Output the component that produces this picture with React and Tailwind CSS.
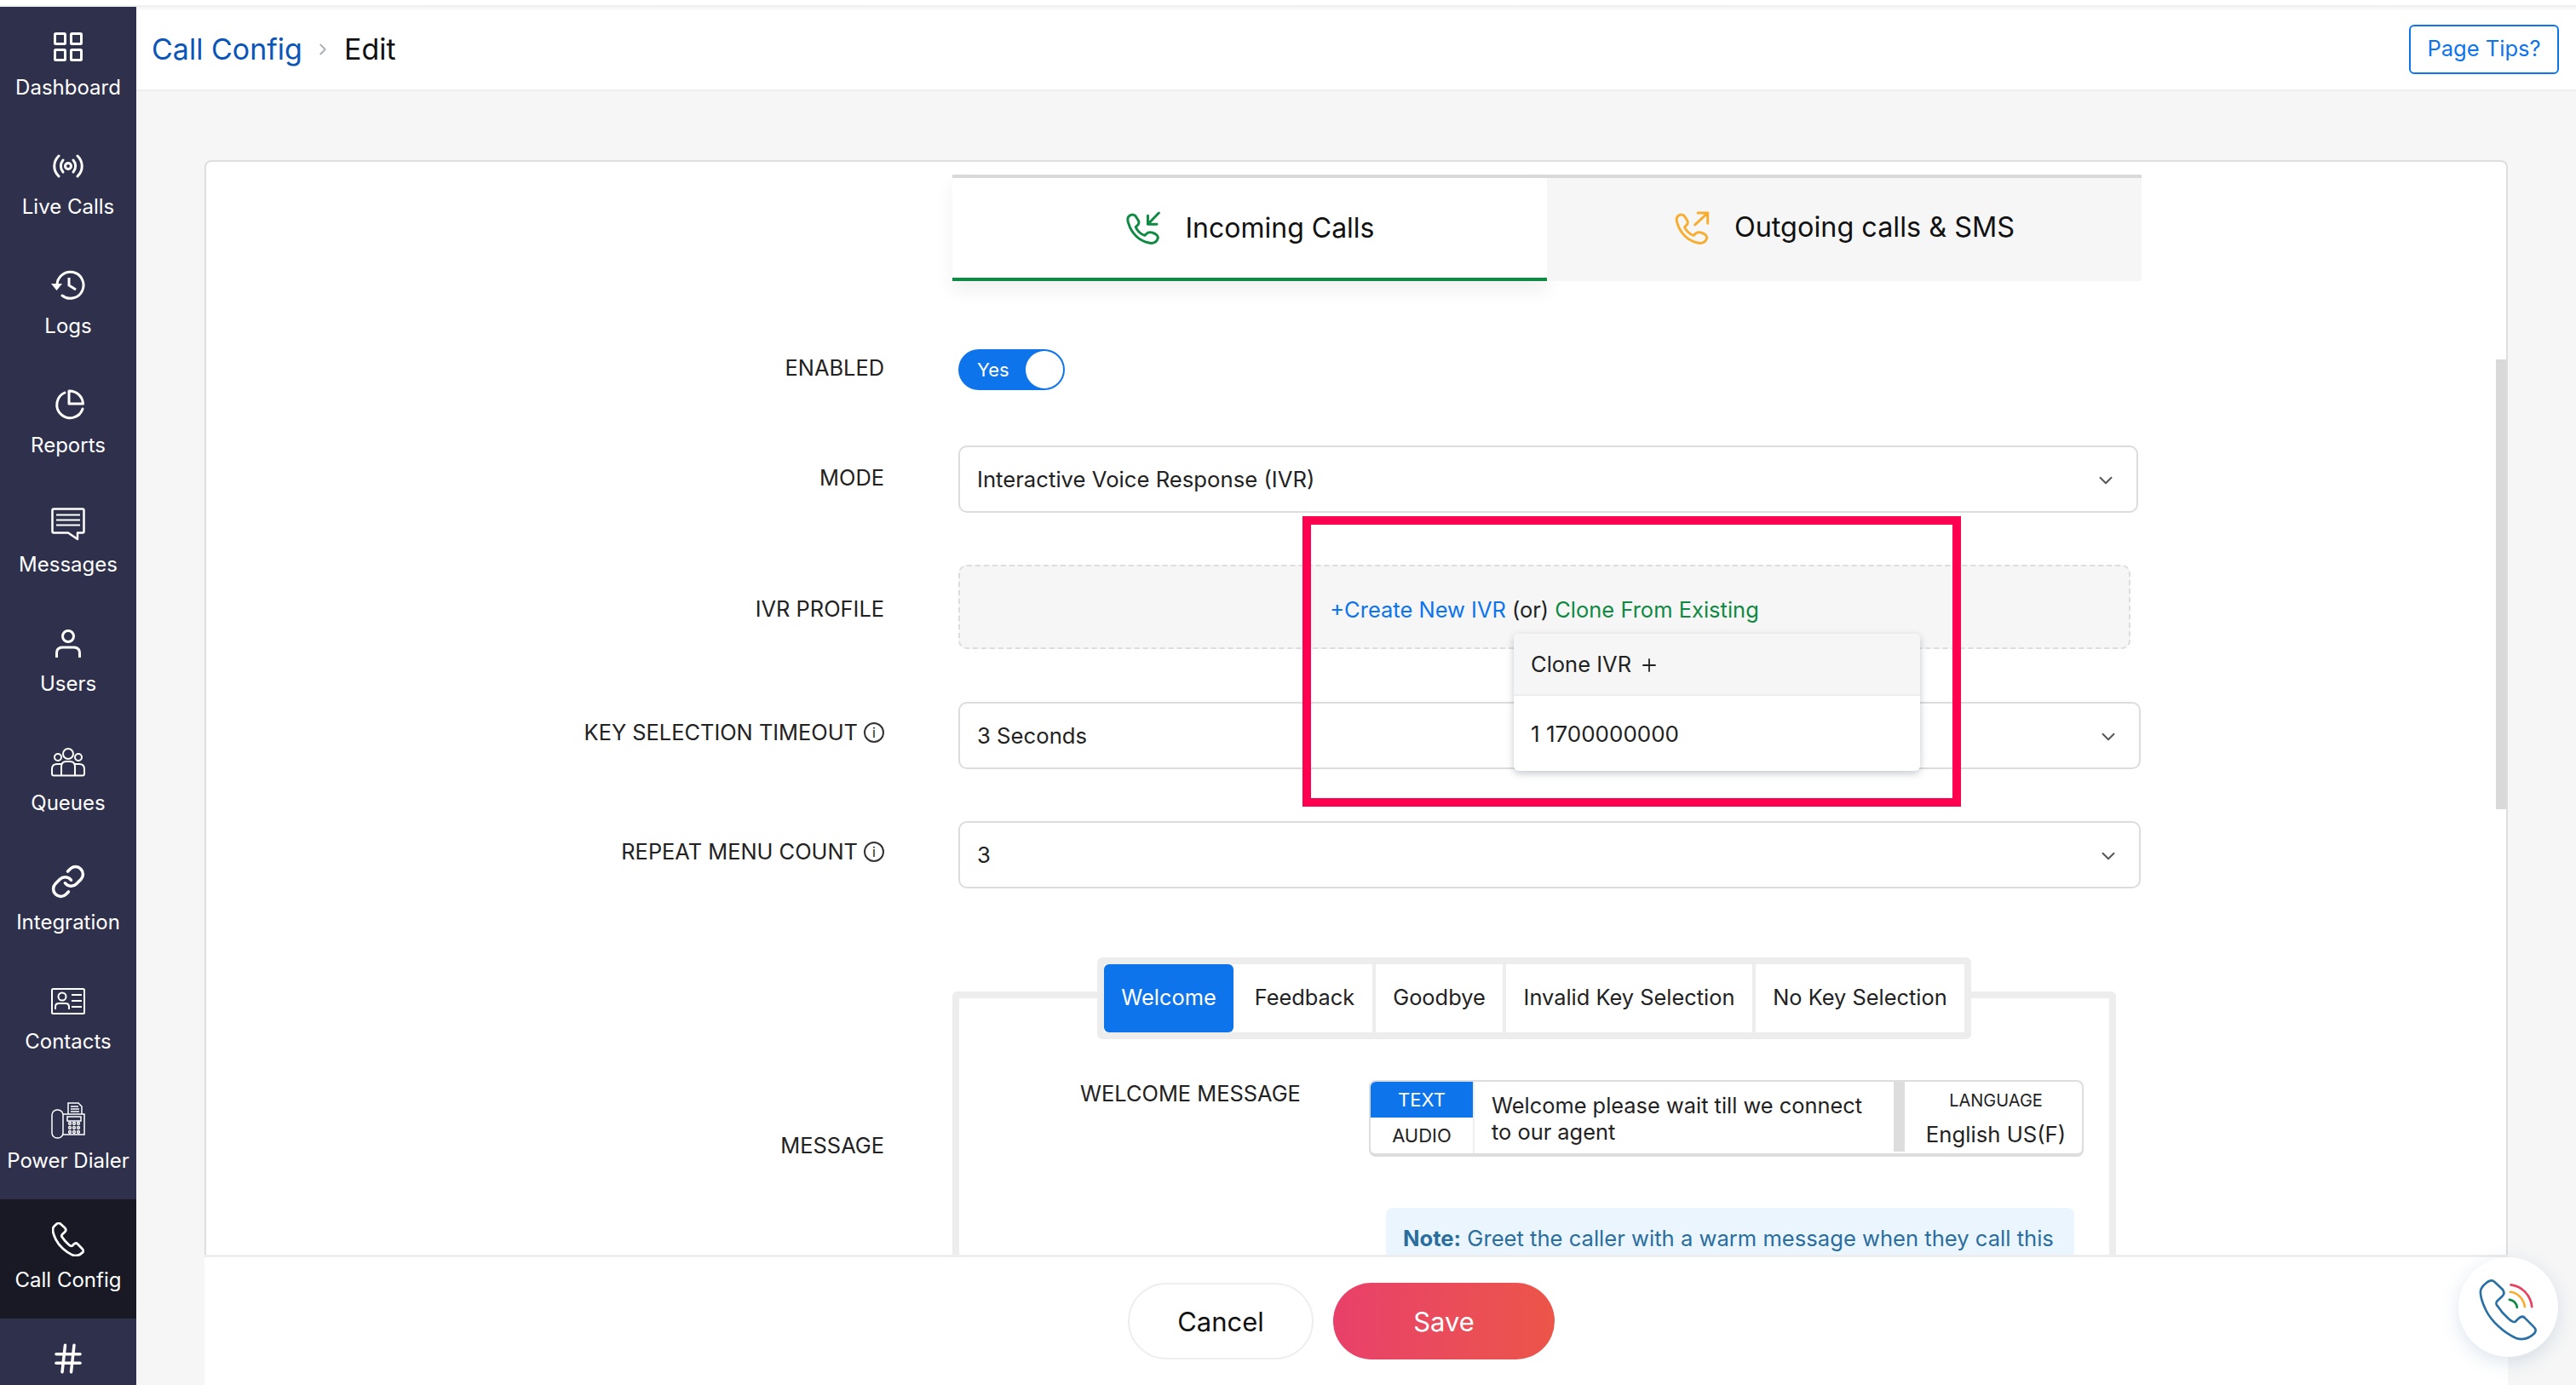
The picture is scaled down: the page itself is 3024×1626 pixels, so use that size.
import React from "react";
import { ChevronDown, ChevronRight, Hash, Link, Plus } from "lucide-react";

const HANDSET =
  "M195 130C185 128 165 145 158 158C152 172 158 200 175 235C195 275 240 315 280 332C305 340 325 335 345 315C352 305 350 300 340 290L310 260C303 254 296 256 288 264L278 274C272 278 265 274 255 265C240 252 225 235 214 218C208 210 210 206 216 200L232 185C240 178 240 170 232 160L205 135C201 131 198 130 195 130Z";

const SMALL_HANDSET =
  "M78 58C86 52 96 54 100 60L110 76C113 84 110 90 104 94L100 98C104 110 118 124 132 128L138 122C144 116 152 116 160 118L172 124C180 130 180 138 176 144C172 152 160 158 146 154C110 146 84 118 74 84C70 72 72 62 78 58Z";

const DashboardIcon = () => (
  <svg width="34" height="34" viewBox="0 0 34 34" fill="none" stroke="currentColor" strokeWidth="3">
    <rect x="1.5" y="1.5" width="12" height="12" rx="1" />
    <rect x="20.5" y="1.5" width="12" height="12" rx="1" />
    <rect x="1.5" y="20.5" width="12" height="12" rx="1" />
    <rect x="20.5" y="20.5" width="12" height="12" rx="1" />
  </svg>
);

const LiveIcon = () => (
  <svg width="38" height="28" viewBox="0 0 38 28" fill="none" stroke="currentColor" strokeWidth="3" strokeLinecap="round">
    <circle cx="19" cy="14" r="3.5" />
    <path d="M8 2C1 9 1 19 8 26M30 2C37 9 37 19 30 26" />
    <path d="M13 7C9.500 11 9.500 17 13 21M25 7C28.500 11 28.500 17 25 21" />
  </svg>
);

const LogsIcon = () => (
  <svg width="42" height="36" viewBox="0 0 42 36" fill="none" stroke="currentColor" strokeWidth="3">
    <path d="M8 18A15.500 15.500 0 1 1 14 30" strokeLinecap="round" />
    <path d="M1 16H14L7.500 24Z" fill="currentColor" stroke="none" />
    <path d="M22 9V18L30 23" />
  </svg>
);

const ReportsIcon = () => (
  <svg width="38" height="37" viewBox="0 0 38 37" fill="none" stroke="currentColor" strokeWidth="3">
    <path d="M15 4A15.500 15.500 0 1 0 36 23" strokeLinecap="round" />
    <path d="M20 2A16 16 0 0 1 36.500 17H20Z" strokeLinejoin="round" />
  </svg>
);

const MessagesIcon = () => (
  <svg width="40" height="39" viewBox="0 0 40 39" fill="none" stroke="currentColor" strokeWidth="2.500">
    <path d="M3 1.500H37Q38.500 1.500 38.500 3V28Q38.500 29.500 37 29.500H31V37L20 29.500H3Q1.500 29.500 1.500 28V3Q1.500 1.500 3 1.500Z" strokeLinejoin="round" />
    <path d="M6 8.500H34M6 14.500H34M6 20.500H34" strokeWidth="2" />
  </svg>
);

const UsersIcon = () => (
  <svg width="30" height="33" viewBox="0 0 30 33" fill="none" stroke="currentColor" strokeWidth="3">
    <circle cx="15" cy="8" r="6.500" />
    <path d="M1.500 33V28Q1.500 21 8.500 21H21.500Q28.500 21 28.500 28V33" />
  </svg>
);

const QueuesIcon = () => (
  <svg width="40" height="34" viewBox="0 0 40 34" fill="none" stroke="currentColor" strokeWidth="2">
    <circle cx="20" cy="7" r="6" />
    <circle cx="8" cy="11" r="4" />
    <circle cx="32" cy="11" r="4" />
    <path d="M12 32V22Q12 16 18 16H22Q28 16 28 22V32" />
    <path d="M12 19H7Q1 19 1 25V30Q1 32.500 3 32.500H37Q39 32.500 39 30V25Q39 19 33 19H28" />
  </svg>
);

const ContactsIcon = () => (
  <svg width="40" height="31" viewBox="0 0 40 31" fill="none" stroke="currentColor" strokeWidth="2">
    <rect x="1" y="1" width="38" height="29" rx="1.500" />
    <circle cx="13" cy="10" r="4.500" />
    <path d="M5 25V22Q5 18 9 18H17Q21 18 21 22V25" />
    <path d="M24 8H36M24 15H36M24 22H36" />
  </svg>
);

const DialerIcon = () => (
  <svg width="40" height="43" viewBox="0 0 40 43" fill="none" stroke="currentColor" strokeWidth="1.500">
    <rect x="1" y="9" width="13" height="33" rx="6" />
    <path d="M14 14H39V38H14" />
    <path d="M20 14V1H32L36 5V14" />
    <path d="M23 5H32M23 8H33M23 11H33" />
    <rect x="19" y="17" width="16" height="5" />
    {[25, 30, 35].map((y) =>
      [22, 27, 32].map((x) => <circle key={`${x}-${y}`} cx={x} cy={y} r="1.400" />)
    )}
  </svg>
);

const CallIcon = () => (
  <svg width="38" height="40" viewBox="150 125 205 215" fill="none" stroke="currentColor" strokeWidth="15" strokeLinejoin="round">
    <path d={HANDSET} />
  </svg>
);

const navItems = [
  { label: "Dashboard", icon: <DashboardIcon /> },
  { label: "Live Calls", icon: <LiveIcon /> },
  { label: "Logs", icon: <LogsIcon /> },
  { label: "Reports", icon: <ReportsIcon /> },
  { label: "Messages", icon: <MessagesIcon /> },
  { label: "Users", icon: <UsersIcon /> },
  { label: "Queues", icon: <QueuesIcon /> },
  { label: "Integration", icon: <Link size={42} strokeWidth={2} /> },
  { label: "Contacts", icon: <ContactsIcon /> },
  { label: "Power Dialer", icon: <DialerIcon /> },
  { label: "Call Config", icon: <CallIcon />, active: true },
  { label: "", icon: <Hash size={42} strokeWidth={2} /> },
];

const Sidebar = () => (
  <aside className="w-[160px] shrink-0 overflow-hidden bg-[#2f314c] text-white">
    {navItems.map((item) => (
      <div
        key={item.label || "hash"}
        className={`flex h-[140px] flex-col items-center pt-[15px] ${item.active ? "bg-[#181924]" : ""}`}
      >
        <div className="flex h-[64px] items-center justify-center">{item.icon}</div>
        <span className="whitespace-nowrap text-[24px] leading-[32px]">{item.label}</span>
      </div>
    ))}
  </aside>
);

const Header = () => (
  <header className="flex h-[99px] shrink-0 items-center justify-between border-b-2 border-[#eeeeee] bg-gradient-to-b from-[#f3f3f3] to-white to-[5%] pl-[18px] pr-[20px] pt-[2px]">
    <div className="flex items-center">
      <span className="text-[34px] text-[#0a56b8]">Call Config</span>
      <ChevronRight size={22} strokeWidth={2} className="ml-[13px] mr-[14px] text-[#a9adb5]" />
      <span className="text-[34px] text-[#111111]">Edit</span>
    </div>
    <button className="flex h-[58px] w-[176px] items-center justify-center rounded-[6px] border-2 border-[#0d74ec] text-[25.500px] text-[#0d74ec]">
      Page Tips?
    </button>
  </header>
);

const CallTabs = () => (
  <div className="ml-[876px] mt-[15px] grid h-[125px] w-[1396px] grid-cols-2">
    <div className="flex items-center justify-center gap-[28px] border-y-4 border-b-[#0f8a43] border-t-[#d9d9d9] bg-white shadow-[0_12px_20px_rgba(0,0,0,0.06)]">
      <svg width="43" height="42" viewBox="60 40 130 125" fill="none" stroke="#0f8a43" strokeWidth="9" strokeLinecap="round" strokeLinejoin="round">
        <path d={SMALL_HANDSET} />
        <path d="M182 48L143 88M143 58V88H175" />
      </svg>
      <span className="text-[32px] text-[#111111]">Incoming Calls</span>
    </div>
    <div className="flex items-center justify-center gap-[28px] border-y-4 border-b-[#f6f6f6] border-t-[#d9d9d9] bg-[#f6f6f6]">
      <svg width="43" height="42" viewBox="45 40 130 125" fill="none" stroke="#f7ad2f" strokeWidth="9" strokeLinecap="round" strokeLinejoin="round">
        <path d={SMALL_HANDSET} transform="translate(-17 0)" />
        <path d="M120 90L165 48M130 48H165V85" />
      </svg>
      <span className="text-[32.400px] text-[#111111]">Outgoing calls &amp; SMS</span>
    </div>
  </div>
);

const InfoDot = () => (
  <span className="ml-[7px] inline-flex h-[24px] w-[24px] items-center justify-center rounded-full border-2 border-[#333333] text-[16px] leading-none">
    i
  </span>
);

const Row = ({ label, info, className, labelClass = "", children }) => (
  <div className={`grid grid-cols-[796px_1fr] items-center gap-x-[87px] ${className}`}>
    <div className={`flex items-center justify-end text-[25.400px] text-[#222222] ${labelClass}`}>
      {label}
      {info && <InfoDot />}
    </div>
    {children}
  </div>
);

const SelectBox = ({ value, width }) => (
  <div className={`flex h-[79px] items-center justify-between rounded-[10px] border-2 border-[#dcdcdc] pl-[20px] pr-[23px] pt-[2px] text-[25.700px] text-[#222222] ${width}`}>
    {value}
    <ChevronDown size={26} strokeWidth={1.800} className="text-[#555555]" />
  </div>
);

const MessageTabs = () => {
  const tabs = [
    { name: "Goodbye", width: "w-[153px]" },
    { name: "Invalid Key Selection", width: "w-[293px]" },
    { name: "No Key Selection", width: "flex-1" },
  ];
  return (
    <div className="relative z-10 flex justify-center">
      <div className="flex h-[96px] w-[1026px] rounded-[6px] border-8 border-[#ededed] bg-white text-[25.400px] text-[#222222]">
        <div className="flex w-[152px] items-center justify-center rounded-[6px] bg-[#0d74ec] pb-[2px] text-white">Welcome</div>
        <div className="ml-[4px] flex w-[159px] items-center justify-center whitespace-nowrap pb-[2px]">Feedback</div>
        {tabs.map((tab) => (
          <div key={tab.name} className={`flex items-center justify-center whitespace-nowrap border-l-4 border-[#ededed] pb-[2px] ${tab.width}`}>
            {tab.name}
          </div>
        ))}
      </div>
    </div>
  );
};

const MessageBox = () => (
  <div className="-mt-[56px] h-[400px] rounded-t-[6px] border-x-[8px] border-t-[8px] border-[#ededed] pl-[142px] pt-[96px]">
    <div className="flex">
      <div className="w-[339px] text-[25.400px] leading-[32px] text-[#222222]">WELCOME MESSAGE</div>
      <div className="flex h-[90px] w-[839px] rounded-[8px] border-2 border-b-4 border-[#dddddd]">
        <div className="flex w-[122px] flex-col border-r-2 border-[#eeeeee] text-[22px]">
          <div className="flex h-[42px] items-center justify-center rounded-tl-[6px] bg-[#0d74ec] text-white">TEXT</div>
          <div className="flex flex-1 items-center justify-center text-[#222222]">AUDIO</div>
        </div>
        <div className="w-[492px] py-[12px] pl-[20px] pr-[20px] text-[25.400px] leading-[31px] text-[#222222]">
          Welcome please wait till we connect to our agent
        </div>
        <div className="h-[82px] w-[13px] bg-[#dddddd]" />
        <div className="flex flex-1 flex-col items-center justify-center gap-[14px] pl-[6px] pt-[2px] text-[#222222]">
          <span className="text-[20px] leading-[24px]">LANGUAGE</span>
          <span className="text-[25.700px] leading-[28px]">English US(F)</span>
        </div>
      </div>
    </div>
    <div className="ml-[359px] mt-[60px] w-[808px] rounded-[8px] bg-[#ebf5fd] pl-[20px] pr-[17px] pt-[20px] text-[25.600px] leading-[32px] text-[#2a6e9f]">
      <b>Note:</b> Greet the caller with a warm message when they call this number.
    </div>
  </div>
);

const ClonePopup = () => (
  <div className="absolute left-[652px] top-[81px] z-20 w-[477px] overflow-hidden rounded-[6px] bg-white text-[25.500px] text-[#222222] shadow-[0_3px_8px_rgba(60,70,90,0.3)]">
    <div className="flex h-[73px] items-center gap-[9px] border-b-2 border-[#eeeeee] bg-[#f6f6f6] pl-[20px] pt-[2px]">
      Clone IVR
      <Plus size={24} strokeWidth={1.800} />
    </div>
    <div className="flex h-[88px] items-center pl-[20px] text-[26px]">1 1700000000</div>
  </div>
);

const CallForm = () => (
  <div className="relative h-full flex-1 overflow-hidden rounded-t-[8px] border-x-2 border-t-2 border-[#dedede] bg-white">
    <CallTabs />
    <Row label="ENABLED" labelClass="pb-[4px]" className="mt-[80px]">
      <div className="flex h-[48px] w-[125px] items-center justify-between rounded-full bg-[#0d74ec] pl-[22px] pr-[2px] text-[22px] text-white">
        Yes
        <span className="h-[44px] w-[44px] rounded-full bg-white" />
      </div>
    </Row>
    <Row label="MODE" labelClass="pb-[2px]" className="mt-[65px]">
      <SelectBox value="Interactive Voice Response (IVR)" width="w-[1385px]" />
    </Row>
    <Row label="IVR PROFILE" labelClass="pt-[6px]" className="mt-[61px]">
      <div className="relative">
        <div className="flex h-[99px] w-[1376px] items-center justify-center rounded-[10px] border-2 border-dashed border-[#dddddd] bg-[#f6f6f6] pt-[8px] text-[25.500px] text-[#222222]">
          <span className="text-[#0d74ec]">+Create New IVR</span>
          <span className="mx-[7px]">(or)</span>
          <span className="text-[#0f8a43]">Clone From Existing</span>
        </div>
        <ClonePopup />
        <div className="absolute -top-[57px] left-[404px] z-30 h-[341px] w-[773px] border-[10px] border-[#ff0050]" />
      </div>
    </Row>
    <Row label="KEY SELECTION TIMEOUT" info labelClass="pb-[6px]" className="mt-[62px]">
      <SelectBox value="3 Seconds" width="w-[1388px]" />
    </Row>
    <Row label="REPEAT MENU COUNT" info labelClass="pb-[6px]" className="mt-[61px]">
      <SelectBox value="3" width="w-[1388px]" />
    </Row>
    <Row label="MESSAGE" className="mt-[81px]">
      <div className="-ml-[7px] h-[442px] w-[1366px]">
        <MessageTabs />
        <MessageBox />
      </div>
    </Row>
    <div className="absolute right-0 top-[232px] h-[528px] w-[12px] bg-[#d9d9d9]" />
  </div>
);

const Footer = () => (
  <footer className="flex h-[153px] shrink-0 items-center gap-[23px] border-t-[3px] border-[#eeeeee] bg-white pl-[1084px]">
    <button className="h-[90px] w-[218px] rounded-full border-2 border-[#eeeeee] bg-white pt-[2px] text-[31px] text-[#111111]">
      Cancel
    </button>
    <button className="h-[90px] w-[260px] rounded-full bg-gradient-to-r from-[#e8406a] to-[#ec5548] pt-[2px] text-[31px] text-white">
      Save
    </button>
  </footer>
);

const CallWidget = () => (
  <div className="absolute left-[2886px] top-[1476px] flex h-[117px] w-[117px] items-center justify-center rounded-full bg-white shadow-[0_6px_22px_rgba(70,110,160,0.18)]">
    <svg width="117" height="117" viewBox="78 48 350 350" fill="none" strokeLinecap="round" strokeLinejoin="round" strokeWidth="8">
      <path d={HANDSET} stroke="#2a70a5" />
      <path d="M262 145C300 150 332 180 336 222" stroke="#e8415f" />
      <path d="M260 170C285 172 308 195 311 222" stroke="#f7ad2f" />
      <path d="M257 197C270 198 282 208 284 224" stroke="#0f8a43" />
    </svg>
  </div>
);

export default function App() {
  return (
    <div className="relative flex h-[1626px] w-[3024px] flex-col overflow-hidden bg-white font-['Inter',sans-serif]">
      <div className="h-[6px] shrink-0 bg-white" />
      <div className="h-[2px] shrink-0 bg-[#f0f0f0]" />
      <div className="flex min-h-0 flex-1">
        <Sidebar />
        <main className="flex min-w-0 flex-1 flex-col bg-[#f6f6f6]">
          <Header />
          <div className="flex min-h-0 flex-1 flex-col pl-[80px] pr-[80px] pt-[81px]">
            <CallForm />
            <Footer />
          </div>
        </main>
      </div>
      <CallWidget />
    </div>
  );
}
